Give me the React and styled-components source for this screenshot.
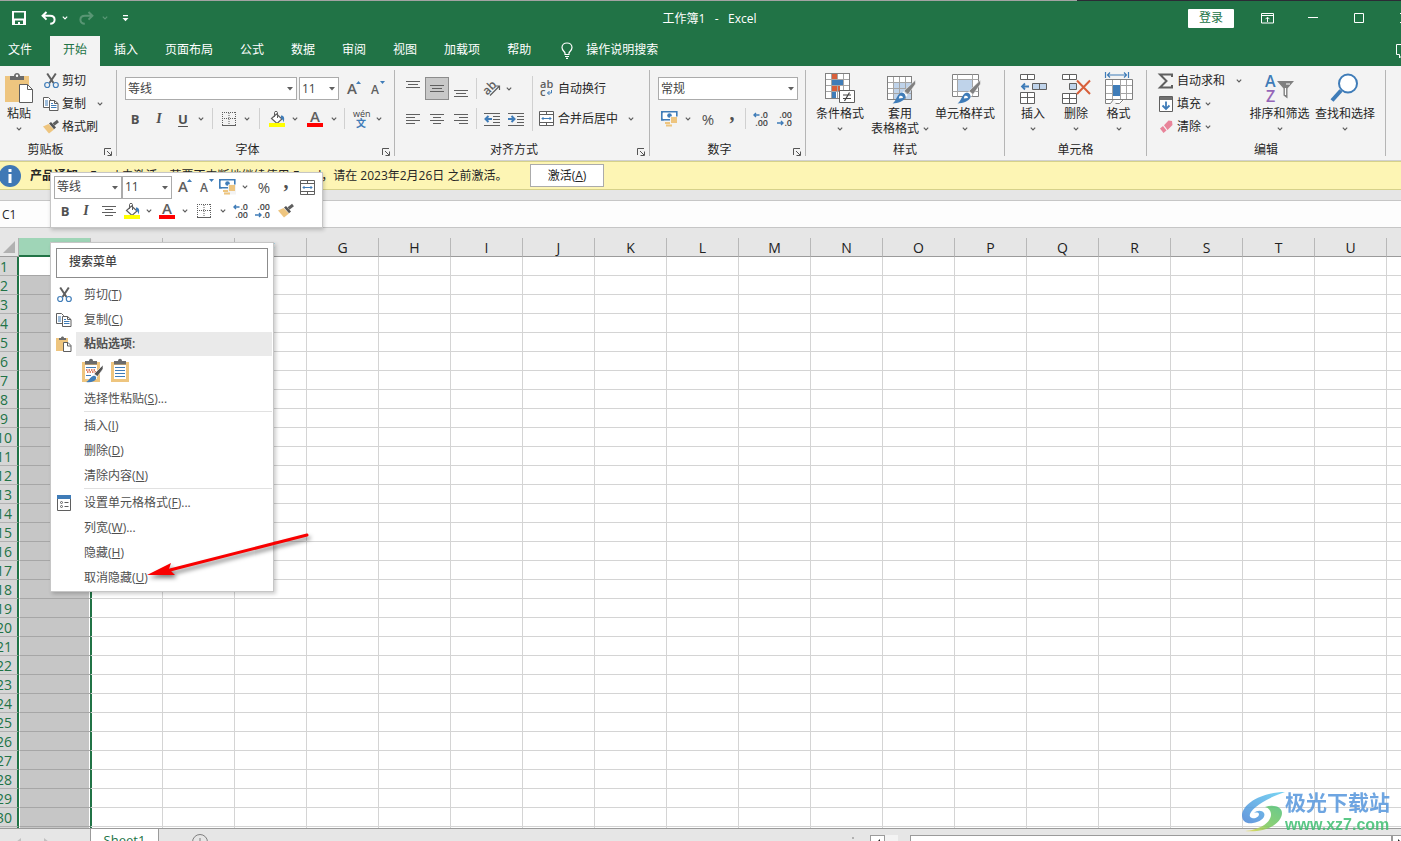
import React from 'react'
import styled, { createGlobalStyle, css } from 'styled-components'

const GREEN = '#217346'
const GRAY = '#5f5f5f'
const BLUE = '#3f7cb8'
const TAN = '#eec57f'

/* ---------- icons ---------- */

function Svg({ w = 16, h = 16, children, label }) {
  return (
    <svg width={w} height={h} viewBox={`0 0 ${w} ${h}`} fill="none" stroke={GRAY} role="img" aria-label={label} aria-hidden={!label}>
      {children}
    </svg>
  )
}

const Chevron = ({ color = GRAY }) => (
  <svg width="6" height="4" viewBox="0 0 6 4" fill="none" stroke={color} strokeWidth="1.2"><path d="M.8.6 3 2.800 5.200.6" /></svg>
)

const Triangle = () => (
  <svg width="6" height="4" viewBox="0 0 6 4"><path d="M0 0h6L3 3.500z" fill={GRAY} /></svg>
)

const SaveIcon = () => (
  <svg width="14" height="14" viewBox="0 0 14 14"><path d="M0 0h14v14H0z" fill="#fff" /><path d="M2 1.500h10v6H2zM3 9.500h8V13H8v-2H6v2H3z" fill={GREEN} /></svg>
)

const UndoIcon = ({ color = '#fff', flip }) => (
  <svg width="15" height="14" viewBox="0 0 15 14" fill="none" stroke={color} strokeWidth="2">
    <g transform={flip ? 'matrix(-1 0 0 1 15 0)' : undefined}>
      <path d="M5.500 1 1.600 4.800l3.900 3.800M1.800 4.800H9c3 0 4.600 1.700 4.600 4 0 2.500-2 4-4.400 4" />
    </g>
  </svg>
)

const CustomizeIcon = () => (
  <svg width="7" height="7" viewBox="0 0 7 7" fill="#fff"><path d="M1 0h5v1.200H1zM.5 3h6l-3 3.200z" /></svg>
)

const RibbonModeIcon = () => (
  <svg width="13" height="11" viewBox="0 0 13 11" fill="none" stroke="#fff"><path d="M.5.5h12v9.500H.5zM1 2.500h11M6.500 9V4.500M4.500 6.200l2-2 2 2" /></svg>
)

const BulbIcon = () => (
  <svg width="12" height="17" viewBox="0 0 12 17" fill="none" stroke="#fff" strokeWidth="1.200"><path d="M4 12.500V11C3.500 9.300 1 8.400 1 5.500 1 2.800 3.200 1 6 1s5 1.800 5 4.500c0 2.900-2.500 3.800-3 5.500v1.500zM4 14.500h4M5 16.300h2" /></svg>
)

const PasteIcon = () => (
  <Svg w={28} h={30}>
    <path d="M0 3h24v26H0z" fill={TAN} stroke="none" />
    <path d="M5 7V3h4c0-4 6-4 6 0h4v4z" fill="#6b6b6b" stroke="none" /><circle cx="12" cy="2.800" r="1.200" fill="#fff" stroke="none" />
    <path d="M14.500 11.500h8l5 5v13h-13z" fill="#fff" /><path d="M22.500 11.500v5h5" />
  </Svg>
)

const CutIcon = () => (
  <Svg w={15} h={16}>
    <path d="M3.200.5 9.500 10M11.800.5 5.500 10" strokeWidth="2" />
    <circle cx="3.200" cy="12" r="2.500" stroke={BLUE} strokeWidth="1.200" /><circle cx="11.800" cy="12" r="2.500" stroke={BLUE} strokeWidth="1.200" />
  </Svg>
)

const CopyIcon = () => (
  <Svg w={16} h={14}>
    <path d="M.5.5h5l2 2v8h-7z" fill="#fff" /><path d="M2 4h3M2 6h3M2 8h3" stroke={BLUE} />
    <path d="M6.500 3.500h5l3.500 3v7H6.500z" fill="#fff" /><path d="M11.500 3.500v3H15" /><path d="M8 8.500h5.500M8 10.500h5.500M8 6.500h2" stroke={BLUE} />
  </Svg>
)

const BrushIcon = () => (
  <Svg w={16} h={14}>
    <path d="M0 6.500 5.500 4l5.500 5.500-5 4z" fill={TAN} stroke="none" />
    <path d="M6 3.500 8 2l5 5.500-2 1.800z" fill="#555" stroke="none" /><path d="M10.500 4.500 15 1" strokeWidth="3" />
  </Svg>
)

const SizeIcon = ({ small }) => (
  <Svg w={15} h={18} label={small ? '减小字号' : '增大字号'}>
    <text x="1" y="14" fontSize={small ? 12 : 15} fontWeight="600" fontFamily="Open Sans, sans-serif" fill={GRAY} stroke="none">A</text>
    <path d={small ? 'M10 1h5l-2.500 3z' : 'M10 4h5L12.500 1z'} fill={BLUE} stroke="none" />
  </Svg>
)

const BorderIcon = () => (
  <Svg w={14} h={14}><path d="M.5 0v13M13.500 0v13M0 .5h14M7 1v12M0 6.500h14" strokeDasharray="1 1" /><path d="M0 13.500h14" /></Svg>
)

const FillIcon = () => (
  <Svg w={16} h={16}>
    <path d="m7.500 3 5.500 5-5 4.500-5.500-5z" fill="#fff" strokeWidth="1.200" /><path d="M5.500 6V1.500c0-1.500 3-1.500 3 0V7" />
    <path d="M12 4.500c3 0 4 2.500 2.500 7-.3-2.500-1-3.500-2.500-4z" fill={BLUE} stroke="none" />
    <path d="M0 12h16v4H0z" fill="#ffff00" stroke="none" />
  </Svg>
)

const FontColorIcon = () => (
  <Svg w={16} h={16} label="字体颜色">
    <text x="3" y="11" fontSize="15" fontWeight="600" fontFamily="Open Sans, sans-serif" fill={GRAY} stroke="none">A</text>
    <path d="M0 12h16v4H0z" fill="#ff0000" stroke="none" />
  </Svg>
)

const PhoneticIcon = () => (
  <Svg w={18} h={18} label="拼音">
    <text x="1" y="7" fontSize="9" fontFamily="Open Sans, sans-serif" fill="#444" stroke="none">wén</text>
    <text x="4" y="17" fontSize="10" fontWeight="700" fontFamily="Noto Sans CJK SC, sans-serif" fill={BLUE} stroke="none">文</text>
  </Svg>
)

const lineSets = {
  top: 'M0 1.500h14M2 4.500h10M0 7.500h14',
  middle: 'M0 5.500h14M2 8.500h10M0 11.500h14',
  bottom: 'M0 10.500h14M2 13.500h10M0 16.500h14',
  left: 'M0 4.500h14M0 7.500h9M0 10.500h14M0 13.500h9',
  center: 'M0 4.500h14M3 7.500h8M0 10.500h14M3 13.500h8',
  right: 'M0 4.500h14M5 7.500h9M0 10.500h14M5 13.500h9',
}
const LinesIcon = ({ kind }) => <Svg w={14} h={18}><path d={lineSets[kind]} /></Svg>

const OrientationIcon = () => (
  <Svg w={17} h={16} label="方向">
    <text x="0" y="11" fontSize="12" fontWeight="600" fontFamily="Open Sans, sans-serif" fill={GRAY} stroke="none" transform="rotate(-45 6 9)">ab</text>
    <path d="m6 14.500 9-9M11.500 5H15.500V9" strokeWidth="1.200" />
  </Svg>
)

const IndentIcon = ({ out }) => (
  <Svg w={16} h={14}>
    <path d="M0 1.500h16M9 4.500h7M9 7.500h7M9 10.500h7M0 13.500h16" />
    <path d={out ? 'M8 7H2M4.500 4 1.500 7l3 3' : 'M0 7h6M3.500 4l3 3-3 3'} stroke={BLUE} strokeWidth="2" />
  </Svg>
)

const WrapIcon = () => (
  <Svg w={15} h={18}>
    <text x="1" y="8" fontSize="11" fontWeight="600" fontFamily="Open Sans, sans-serif" fill={GRAY} stroke="none">ab</text>
    <text x="1" y="16" fontSize="11" fontWeight="600" fontFamily="Open Sans, sans-serif" fill={GRAY} stroke="none">c</text>
    <path d="M12.500 10v3H8.500M10.500 11l-2 2 2 2" stroke={BLUE} />
  </Svg>
)

const MergeIcon = () => (
  <Svg w={15} h={15}>
    <path d="M.5.500h14v14H.5zM.5 3.500h14M.5 11.500h14M7.500.5v3M7.500 11.500v3" fill="#fff" />
    <path d="M3 7.500h9M4.500 6 3 7.500 4.500 9M10.500 6 12 7.500 10.500 9" stroke={BLUE} />
  </Svg>
)

const MoneyIcon = () => (
  <Svg w={17} h={16}>
    <path d="M.8.8h15v8H.8z" fill="#fff" stroke={BLUE} strokeWidth="1.600" /><circle cx="8.500" cy="4.500" r="2.300" fill={BLUE} stroke="none" />
    <path d="M0 3.500 3 0H0zM0 6l3 3.500H0z" fill={BLUE} stroke="none" />
    <path d="M9 5.500h8v10H5v-5h4z" fill="#f3f3f3" stroke="none" />
    <path d="M10 7h6M10 9h6M10 11h6M4 12h5M5 14.500h6" stroke={TAN} strokeWidth="1.800" />
  </Svg>
)

const DecimalIcon = ({ more }) => (
  <Svg w={16} h={16} label={more ? '增加小数位数' : '减少小数位数'}>
    <text x="15" y="7" textAnchor="end" fontSize="9" fontWeight="600" fontFamily="Open Sans, sans-serif" fill="#444" stroke="none">{more ? '.0' : '.00'}</text>
    <text x="15" y="15" textAnchor="end" fontSize="9" fontWeight="600" fontFamily="Open Sans, sans-serif" fill="#444" stroke="none">{more ? '.00' : '.0'}</text>
    <path d={more ? 'M6.500 4H1M3 2 1 4l2 2' : 'M0 12h6M4 10l2 2-2 2'} stroke={BLUE} strokeWidth="1.400" />
  </Svg>
)

const ConditionalIcon = () => (
  <Svg w={30} h={31}>
    <path d="M.5.5h24v25H.5z" fill="#fff" />
    <path d="M7 1h6v6H7zM7 13h8v6H7z" fill="#d85f3a" stroke="none" /><path d="M7 7h11v6H7zM7 19h4v6H7z" fill={BLUE} stroke="none" />
    <path d="M6.500.5v25M12.500.5v25M18.500.5v25M.5 6.500h24M.5 12.500h24M.5 18.500h24" stroke="#a5a5a5" />
    <path d="M7 7h11v5H7z" fill={BLUE} stroke="none" />
    <path d="M.5.5h24v25H.5z" stroke="#808080" /><path d="M14.500 17.500h15v12h-15z" fill="#fff" />
    <path d="M18 22h8M18 25.500h8M24.500 19.500l-5 8.500" strokeWidth="1.200" stroke="#444" />
  </Svg>
)

const StyleBrush = () => (
  <g stroke="none">
    <path d="M31.500 7v4L24 21.500l-4-3.500z" fill="#808080" stroke="#f3f3f3" strokeWidth=".6" />
    <path d="M19.500 18.500 23.500 22 22 24l-4.500-3.800z" fill="#fff" />
    <path d="M16.500 20c3-.8 5.500 1.400 5 4.300C20.500 28 14 30.500 8.500 30.500c3.500-2 4.500-9 8-10.500z" fill={BLUE} />
    <path d="M15.500 23c2-1 3.800.2 3.300 2l-4 .6z" fill="#fff" />
  </g>
)

const TableStyleIcon = () => (
  <Svg w={32} h={31}>
    <path d="M3.500 3.500h24v23h-24z" fill="#fff" /><path d="M9 9h18v17H9z" fill="#bfd3ea" stroke="none" />
    <path d="M9.500 3.500v23M15.500 3.500v23M21.500 3.500v23M3.500 9.500h24M3.500 15.500h24M3.500 20.500h24" stroke="#a5a5a5" />
    <path d="M3.500 3.500h24v23h-24z" stroke="#808080" /><StyleBrush />
  </Svg>
)

const CellStyleIcon = () => (
  <Svg w={32} h={31}>
    <path d="M3.500 1.500h26v22h-26z" fill="#fff" stroke="#808080" /><path d="M9 7h14v11H9z" fill="#bfd3ea" stroke="none" />
    <path d="M8.500 1.500v22M23.500 1.500v22M3.500 6.500h26M3.500 18.500h26" stroke="#a5a5a5" /><StyleBrush />
  </Svg>
)

const InsertCellsIcon = () => (
  <Svg w={28} h={31}>
    <path d="M1.500 1.500h14v5h-14zM8.500 1.500v5M1.500 19.500h14v11h-14zM8.500 19.500v11M1.500 24.500h14" fill="#fff" />
    <path d="M13.500 10.500h14v6h-14zM20.500 10.500v6" fill="#bfd3ea" /><path d="M10 13.500H3.500M6 10.500l-3 3 3 3" stroke={BLUE} strokeWidth="1.800" />
  </Svg>
)

const DeleteCellsIcon = () => (
  <Svg w={30} h={31}>
    <path d="M1.500 1.500h14v5h-14zM8.500 1.500v5M1.500 20.500h14v10h-14zM8.500 20.500v10M1.500 25.500h14" fill="#fff" />
    <path d="M8.500 10.500h7v6h-7z" fill="#bfd3ea" /><path d="M16 7.500 29 21M29 7.500 16 21" stroke="#d85f3a" strokeWidth="2" />
  </Svg>
)

const FormatCellsIcon = () => (
  <Svg w={30} h={32}>
    <path d="M1.500 0v6M24.500 0v6M3 3h20M6 .5 3.500 3 6 5.500M20 .5 22.500 3 20 5.500" stroke={BLUE} strokeWidth="1.200" />
    <path d="M1.500 7.500h27v20h-7l-5 4h-3l-3-3-4 3h-5z" fill="#fff" stroke="none" />
    <path d="M8.500 7.500v20M16.500 7.500v20M22.500 7.500v20M1.500 13.500h27M1.500 21.500h27" stroke="#a5a5a5" /><path d="M9 13h7v11H9z" fill={BLUE} stroke="none" />
    <path d="M1.500 7.500h27v20h-27zM1.500 27.500v4h5l3-4M11.500 31.500h4l4-4" stroke="#808080" />
  </Svg>
)

const SortIcon = () => (
  <Svg w={32} h={31} label="A到Z">
    <text x="1" y="14" fontSize="16" fontWeight="600" fontFamily="Open Sans, sans-serif" fill={BLUE} stroke="none">A</text>
    <text x="2" y="29" fontSize="16" fontWeight="600" fontFamily="Open Sans, sans-serif" fill="#9566b8" stroke="none">Z</text>
    <path d="M13 8h17l-6.500 7.500v10l-4-3v-7z" fill="#808080" stroke="none" /><path d="M22 11h4M21.500 15v7" stroke="#fff" strokeWidth="1.200" />
  </Svg>
)

const FindIcon = () => (
  <Svg w={30} h={30}><path d="M11 17.500 2 27.500" stroke={BLUE} strokeWidth="4" /><circle cx="18" cy="10.500" r="9" stroke={BLUE} strokeWidth="2" fill="#fff" /></Svg>
)

const SigmaIcon = () => <Svg w={16} h={16}><path d="M14 4V1.500H2L8.500 8 2 14.500h12V12" strokeWidth="2" /></Svg>
const FillDownIcon = () => (
  <Svg w={14} h={16}><path d="M.5.500h13v15H.5z" fill="#fff" /><path d="M1 1h12v3H1z" fill="#707070" stroke="none" /><path d="M7 5.500v7M3.500 9.500 7 13l3.500-3.500" stroke={BLUE} strokeWidth="1.800" /></Svg>
)
const EraserIcon = () => (
  <Svg w={14} h={14}><path d="m1 8.500 3.500 4.500 3-2.500-3.500-4.500zM5 5.300 9.500.5l3.500.5.5 4-5 5z" fill="#e8849a" stroke="none" /></Svg>
)

const LauncherIcon = () => <Svg w={8} h={8}><path d="M.5 7V.500H7M3 3l4 4M7.500 3.500v4h-4" stroke="#555" /></Svg>

const InfoIcon = () => (
  <svg width="22" height="22" viewBox="0 0 22 22"><circle cx="11" cy="11" r="11" fill="#3f78b5" /><path d="M9.500 4h3v3h-3zM9.500 9h3v9h-3z" fill="#fff" /></svg>
)

const PasteSmallIcon = () => (
  <Svg w={16} h={16}>
    <path d="M0 2h12v13H0z" fill={TAN} stroke="none" /><path d="M3 4V2h2c0-2 3-2 3 0h2v2z" fill="#6b6b6b" stroke="none" />
    <path d="M7.500 6.500h4.500l3 3v6H7.500z" fill="#fff" /><path d="M11.500 6.500v3.500H15" />
  </Svg>
)

const ClipIcon = ({ brush }) => (
  <Svg w={22} h={24} label={brush ? '保留源格式' : '粘贴'}>
    <path d="M1 3h18v20H1z" fill={TAN} stroke="none" /><path d="M4 6h12v14H4z" fill="#fff" stroke="none" />
    <path d="M4 5.500V2h4c0-3 4-3 4 0h4v3.500z" fill="#6b6b6b" stroke="none" />
    <path d={brush ? 'M5 8.500h10M5 16.500h5' : 'M5 8.500h10M5 11.500h10M5 14.500h10M5 17.500h10'} stroke={BLUE} />
    {brush && (
      <>
        <path d="M5 11h10M6 13h9" stroke="#d85f3a" strokeWidth="1.500" strokeDasharray="1.500 1" />
        <path d="m22 6-9 9 3.500 2.500L22 10z" fill="#555" stroke="#fff" strokeWidth=".6" /><path d="M12 17c2-1 4 1 3 3s-5 4-10 3c3-1 4-5 7-6z" fill={BLUE} stroke="none" />
      </>
    )}
  </Svg>
)

const FormatDialogIcon = () => (
  <Svg w={14} h={16}><path d="M.5.500h13v15H.5z" fill="#fff" /><path d="M0 0h14v4H0z" fill={BLUE} stroke="none" /><path d="M7.500 7.500h4M7.500 11.500h4" /><circle cx="4.500" cy="7.500" r="1" /><circle cx="4.500" cy="11.500" r="1" /></Svg>
)

const SwirlLogo = () => (
  <svg width="44" height="40" viewBox="0 0 44 40">
    <defs>
      <linearGradient id="swirlBlue" x1="0" y1="1" x2="1" y2="0"><stop offset="0" stopColor="#4a84d6" /><stop offset="1" stopColor="#62cff2" /></linearGradient>
      <linearGradient id="swirlGreen" x1="1" y1="0" x2="0" y2="1"><stop offset="0" stopColor="#4fc17a" /><stop offset=".6" stopColor="#7cc95c" /><stop offset="1" stopColor="#f3dc4c" /></linearGradient>
    </defs>
    <path d="M44 0C22 0 2 11 1 23c0 7 5 9 11 8 8-1 13-6 11-10-2-3-7-3-10 0 3-1 5 0 5 1 0 3-4 5-7 4C3 23 17 9 44 0z" fill="url(#swirlBlue)" />
    <path d="M24 15c9-3 17 0 17 6 0 9-13 20-37 18 13-1 25-7 26-16 0-4-2-7-6-8z" fill="url(#swirlGreen)" />
  </svg>
)

/* ---------- pieces ---------- */

function Combo({ label, value, wide }) {
  return (
    <ComboBox $wide={wide}>
      <ComboSelect aria-label={label} defaultValue={value}><option>{value}</option></ComboSelect>
      <ComboArrow><Triangle /></ComboArrow>
    </ComboBox>
  )
}

function Group({ name, launcher, children }) {
  return (
    <>
      <GroupBox>
        <GroupBody>{children}</GroupBody>
        <GroupFooter>
          <GroupName>{name}</GroupName>
          {launcher && <Launcher aria-label={`${name}设置`}><LauncherIcon /></Launcher>}
        </GroupFooter>
      </GroupBox>
      <GroupLine />
    </>
  )
}

function BigCommand({ icon, label, second, width }) {
  return (
    <BigButton $width={width}>
      <BigIcon>{icon}</BigIcon>
      <BigLabel>{label}</BigLabel>
      <BigLabel>{second}<Chevron /></BigLabel>
    </BigButton>
  )
}

function ListCommand({ icon, label, menu, far }) {
  return (
    <ListButton>
      <ListIcon>{icon}</ListIcon>
      {label}
      {menu && <ListArrow $far={far}><Chevron /></ListArrow>}
    </ListButton>
  )
}

function MenuEntry({ icon, text, hotkey, dots }) {
  return (
    <MenuItem role="menuitem">
      <MenuIcon>{icon}</MenuIcon>
      <span>{text}(<u>{hotkey}</u>){dots && '...'}</span>
    </MenuItem>
  )
}

const tabs = ['开始', '插入', '页面布局', '公式', '数据', '审阅', '视图', '加载项', '帮助']
const columns = ['C', 'D', 'E', 'F', 'G', 'H', 'I', 'J', 'K', 'L', 'M', 'N', 'O', 'P', 'Q', 'R', 'S', 'T', 'U', 'V']
const rows = Array.from({ length: 31 }, (_, i) => i + 1)

function TitleBar() {
  return (
    <TitleRow>
      <QuickAccess>
        <QuickButton $width={38} aria-label="保存"><SaveIcon /></QuickButton>
        <QuickButton $width={20} aria-label="撤消"><UndoIcon /></QuickButton>
        <QuickButton $width={14} aria-label="撤消列表"><Chevron color="#fff" /></QuickButton>
        <QuickButton $width={28} $dim aria-label="恢复"><UndoIcon flip /></QuickButton>
        <QuickButton $width={10} $dim aria-label="恢复列表"><Chevron color="#fff" /></QuickButton>
        <QuickButton $width={30} aria-label="自定义快速访问工具栏"><CustomizeIcon /></QuickButton>
      </QuickAccess>
      <DocTitle>工作簿1&nbsp;&nbsp; -&nbsp;&nbsp; Excel</DocTitle>
      <WindowButtons>
        <SignIn>登录</SignIn>
        <WindowButton aria-label="功能区显示选项"><RibbonModeIcon /></WindowButton>
        <WindowButton aria-label="最小化"><svg width="10" height="10" stroke="#fff"><path d="M0 4.500h10" /></svg></WindowButton>
        <WindowButton aria-label="最大化"><svg width="10" height="10" stroke="#fff" fill="none"><path d="M.5.500h9v9h-9z" /></svg></WindowButton>
        <WindowButton aria-label="关闭"><svg width="10" height="10" stroke="#fff"><path d="m0 0 10 10M10 0 0 10" /></svg></WindowButton>
      </WindowButtons>
    </TitleRow>
  )
}

function Ribbon() {
  return (
    <RibbonBar>
      <Group name="剪贴板" launcher>
        <ClipboardBody>
          <BigCommand icon={<PasteIcon />} label="粘贴" width={48} />
          <CommandList>
            <ListCommand icon={<CutIcon />} label="剪切" />
            <ListCommand icon={<CopyIcon />} label="复制" menu far />
            <ListCommand icon={<BrushIcon />} label="格式刷" />
          </CommandList>
        </ClipboardBody>
      </Group>
      <Group name="字体" launcher>
        <ToolRows $width={264}>
          <ToolRow>
            <ComboPad />
            <Combo label="字体" value="等线" wide={172} />
            <ComboPad />
            <Combo label="字号" value="11" wide={40} />
            <Tool $width={28}><SizeIcon /></Tool>
            <Tool $width={20}><SizeIcon small /></Tool>
          </ToolRow>
          <ToolRow>
            <Tool $width={24}><Letter $bold>B</Letter></Tool>
            <Tool $width={24}><Letter $italic>I</Letter></Tool>
            <Tool $width={24}><Letter $underline>U</Letter></Tool>
            <Tool $width={12} aria-label="下划线"><Chevron /></Tool>
            <ToolLine />
            <Tool $width={22} aria-label="边框"><BorderIcon /></Tool>
            <Tool $width={14} aria-label="更多边框"><Chevron /></Tool>
            <ToolLine />
            <Tool $width={24} aria-label="填充颜色"><FillIcon /></Tool>
            <Tool $width={12} aria-label="更多填充颜色"><Chevron /></Tool>
            <Tool $width={28}><FontColorIcon /></Tool>
            <Tool $width={10} aria-label="更多字体颜色"><Chevron /></Tool>
            <ToolLine />
            <Tool $width={22}><PhoneticIcon /></Tool>
            <Tool $width={14} aria-label="更多拼音"><Chevron /></Tool>
          </ToolRow>
        </ToolRows>
      </Group>
      <Group name="对齐方式" launcher>
        <ToolRows $width={128} $tight>
          <ToolRow>
            <Tool $width={24} aria-label="顶端对齐"><LinesIcon kind="top" /></Tool>
            <Tool $width={24} $on aria-label="垂直居中"><LinesIcon kind="middle" /></Tool>
            <Tool $width={24} aria-label="底端对齐"><LinesIcon kind="bottom" /></Tool>
            <ToolLine $narrow />
            <Tool $width={24}><OrientationIcon /></Tool>
            <Tool $width={10} aria-label="更多方向"><Chevron /></Tool>
          </ToolRow>
          <ToolRow>
            <Tool $width={24} aria-label="左对齐"><LinesIcon kind="left" /></Tool>
            <Tool $width={24} aria-label="居中"><LinesIcon kind="center" /></Tool>
            <Tool $width={24} aria-label="右对齐"><LinesIcon kind="right" /></Tool>
            <ToolLine $narrow />
            <Tool $width={24} aria-label="减少缩进量"><IndentIcon out /></Tool>
            <Tool $width={24} aria-label="增加缩进量"><IndentIcon /></Tool>
          </ToolRow>
        </ToolRows>
        <TallLine />
        <ToolRows $width={103}>
          <ToolRow><TextTool><WrapIcon />自动换行</TextTool></ToolRow>
          <ToolRow><TextTool><MergeIcon />合并后居中</TextTool><Tool $width={14} aria-label="更多合并"><Chevron /></Tool></ToolRow>
        </ToolRows>
      </Group>
      <Group name="数字" launcher>
        <ToolRows $width={142}>
          <ToolRow><ComboPad /><Combo label="数字格式" value="常规" wide={140} /></ToolRow>
          <ToolRow>
            <Tool $width={26} aria-label="会计数字格式"><MoneyIcon /></Tool>
            <Tool $width={12} aria-label="更多货币"><Chevron /></Tool>
            <Tool $width={28}><Letter $big>%</Letter></Tool>
            <Tool $width={20}><Letter $comma>,</Letter></Tool>
            <ToolLine $narrow />
            <Tool $width={24}><DecimalIcon more /></Tool>
            <Tool $width={24}><DecimalIcon /></Tool>
          </ToolRow>
        </ToolRows>
      </Group>
      <Group name="样式">
        <BigRow>
          <BigCommand icon={<ConditionalIcon />} label="条件格式" width={60} />
          <BigCommand icon={<TableStyleIcon />} label="套用" second="表格格式" width={60} />
          <BigCommand icon={<CellStyleIcon />} label="单元格样式" width={70} />
        </BigRow>
      </Group>
      <Group name="单元格">
        <BigRow>
          <BigCommand icon={<InsertCellsIcon />} label="插入" width={48} />
          <BigCommand icon={<DeleteCellsIcon />} label="删除" width={38} />
          <BigCommand icon={<FormatCellsIcon />} label="格式" width={47} />
        </BigRow>
      </Group>
      <Group name="编辑">
        <EditBody>
          <CommandList>
            <ListCommand icon={<SigmaIcon />} label="自动求和" menu far />
            <ListCommand icon={<FillDownIcon />} label="填充" menu />
            <ListCommand icon={<EraserIcon />} label="清除" menu />
          </CommandList>
          <BigRow>
            <BigCommand icon={<SortIcon />} label="排序和筛选" width={65} />
            <BigCommand icon={<FindIcon />} label="查找和选择" width={66} />
          </BigRow>
        </EditBody>
      </Group>
    </RibbonBar>
  )
}

function Grid() {
  return (
    <GridArea>
      <Sheet>
        <thead>
          <tr>
            <Corner><svg width="12" height="12"><path d="M12 0v12H0z" fill="#b1b1b1" /></svg></Corner>
            {columns.map((c, i) => <ColHead key={c} $selected={i === 0} scope="col">{c}</ColHead>)}
          </tr>
        </thead>
        <tbody>
          {rows.map((r) => (
            <tr key={r}>
              <RowHead scope="row">{r}</RowHead>
              {columns.map((c, i) => <Cell key={c} $selected={i === 0} $active={i === 0 && r === 1} />)}
            </tr>
          ))}
        </tbody>
      </Sheet>
    </GridArea>
  )
}

function MiniToolbar() {
  return (
    <MiniBox>
      <MiniRow>
        <Combo label="浮动字体" value="等线" wide={68} />
        <Combo label="浮动字号" value="11" wide={50} />
        <Tool $width={24}><SizeIcon /></Tool>
        <Tool $width={20}><SizeIcon small /></Tool>
        <Tool $width={22} aria-label="货币"><MoneyIcon /></Tool>
        <Tool $width={14} aria-label="更多货币"><Chevron /></Tool>
        <Tool $width={24}><Letter $big>%</Letter></Tool>
        <Tool $width={20}><Letter $comma>,</Letter></Tool>
        <Tool $width={22} aria-label="合并"><MergeIcon /></Tool>
      </MiniRow>
      <MiniRow>
        <Tool $width={22}><Letter $bold>B</Letter></Tool>
        <Tool $width={20}><Letter $italic>I</Letter></Tool>
        <Tool $width={26} aria-label="居中"><LinesIcon kind="center" /></Tool>
        <Tool $width={20} aria-label="填充颜色"><FillIcon /></Tool>
        <Tool $width={14} aria-label="更多填充"><Chevron /></Tool>
        <Tool $width={22}><FontColorIcon /></Tool>
        <Tool $width={14} aria-label="更多颜色"><Chevron /></Tool>
        <Tool $width={24} aria-label="边框"><BorderIcon /></Tool>
        <Tool $width={14} aria-label="更多边框"><Chevron /></Tool>
        <Tool $width={22}><DecimalIcon more /></Tool>
        <Tool $width={22}><DecimalIcon /></Tool>
        <Tool $width={24} aria-label="格式刷"><BrushIcon /></Tool>
      </MiniRow>
    </MiniBox>
  )
}

function ContextMenu() {
  return (
    <MenuBox role="menu">
      <MenuSearch type="text" placeholder="搜索菜单" aria-label="搜索菜单" />
      <MenuEntry icon={<CutIcon />} text="剪切" hotkey="T" />
      <MenuEntry icon={<CopyIcon />} text="复制" hotkey="C" />
      <PasteHeader>
        <MenuIcon><PasteSmallIcon /></MenuIcon>
        <PasteTitle>粘贴选项:</PasteTitle>
      </PasteHeader>
      <PasteRow>
        <PasteChoice><ClipIcon brush /></PasteChoice>
        <PasteChoice><ClipIcon /></PasteChoice>
      </PasteRow>
      <MenuEntry text="选择性粘贴" hotkey="S" dots />
      <MenuLine />
      <MenuEntry text="插入" hotkey="I" />
      <MenuEntry text="删除" hotkey="D" />
      <MenuEntry text="清除内容" hotkey="N" />
      <MenuLine />
      <MenuEntry icon={<FormatDialogIcon />} text="设置单元格格式" hotkey="F" dots />
      <MenuEntry text="列宽" hotkey="W" dots />
      <MenuEntry text="隐藏" hotkey="H" />
      <MenuEntry text="取消隐藏" hotkey="U" />
    </MenuBox>
  )
}

function App() {
  return (
    <>
      <GlobalStyle />
      <Screen>
        <Window>
          <TitleBar />
          <TabRow>
            <FileTab>文件</FileTab>
            {tabs.map((t, i) => <Tab key={t} $active={i === 0}>{t}</Tab>)}
            <TellMe><BulbIcon />操作说明搜索</TellMe>
            <CommentButton aria-label="批注">
              <svg width="15" height="15" fill="none" stroke="#fff"><path d="M.5.500h14v10H7l-3.500 3.500v-3.500h-3z" /></svg>
            </CommentButton>
          </TabRow>
          <Ribbon />
          <NoticeBar>
            <InfoIcon />
            <NoticeTitle>产品通知</NoticeTitle>
            <NoticeText>Excel 未激活。若要不中断地继续使用 Excel，请在 2023年2月26日 之前激活。</NoticeText>
            <ActivateButton>激活(<u>A</u>)</ActivateButton>
          </NoticeBar>
          <FormulaRow>
            <NameBox aria-label="名称框" defaultValue="C1" />
            <FormulaInput aria-label="编辑栏" />
          </FormulaRow>
          <Grid />
          <SheetBar>
            <SheetNav>
              <svg width="5" height="8"><path d="M5 0v8L0 4z" fill="#c0c0c0" /></svg>
              <svg width="5" height="8"><path d="M0 0v8l5-4z" fill="#c0c0c0" /></svg>
            </SheetNav>
            <SheetTab>Sheet1</SheetTab>
            <AddSheet aria-label="新工作表"><svg width="18" height="18" fill="none" stroke="#808080"><circle cx="9" cy="9" r="7.500" /><path d="M9 5v8M5 9h8" /></svg></AddSheet>
            <Grip />
            <ScrollButton aria-label="向左滚动"><svg width="4" height="8"><path d="M4 0v8L0 4z" fill="#222" /></svg></ScrollButton>
            <ScrollGap />
            <ScrollThumb />
            <ScrollButton aria-label="向右滚动"><svg width="4" height="8"><path d="M0 0v8l4-4z" fill="#222" /></svg></ScrollButton>
          </SheetBar>
          <MiniToolbar />
          <ContextMenu />
          <ArrowMark width="180" height="60" viewBox="0 0 180 60">
            <path d="M165 9 28 44" stroke="#f80000" strokeWidth="3" strokeLinecap="round" />
            <path d="M5 49 29 37l-2 6 6 6z" fill="#f80000" />
          </ArrowMark>
          <Watermark>
            <SwirlLogo />
            <WatermarkText>
              <WatermarkName>极光下载站</WatermarkName>
              <WatermarkUrl>www.xz7.com</WatermarkUrl>
            </WatermarkText>
          </Watermark>
        </Window>
      </Screen>
    </>
  )
}

export default App

/* ---------- styles ---------- */

const GlobalStyle = createGlobalStyle`
  * { box-sizing: border-box; }
  body {
    margin: 0;
    overflow: hidden;
    font: 12px/16px "Open Sans", "Noto Sans CJK SC", sans-serif;
    color: #262626;
  }
  button, input, select { font: inherit; color: inherit; }
  button { border: 0; background: none; padding: 0; white-space: nowrap; }
  svg { display: block; flex: none; overflow: visible; }
`;

const Screen = styled.div`
  height: 100vh;
  overflow: hidden;
`;

/* the maximised window runs a little past both sides of the screen */
const Window = styled.div`
  position: relative;
  display: flex;
  flex-direction: column;
  height: 100%;
  margin: 0 -27px 0 -9px;
  background: #e6e6e6;
`;

const TitleRow = styled.header`
  display: grid;
  grid-template-columns: 1fr auto 1fr;
  align-items: center;
  height: 36px;
  flex: none;
  background: linear-gradient(90deg, #a3a3a3 1086px, #2b2b35 1086px) top / 100% 1px no-repeat ${GREEN};
  color: #fff;
`;
const QuickAccess = styled.div`
  display: flex;
  align-items: center;
  padding-left: 9px;
`;
const QuickButton = styled.button`
  display: flex;
  justify-content: center;
  width: ${(p) => p.$width}px;
  opacity: ${(p) => (p.$dim ? 0.25 : 1)};
`;
const DocTitle = styled.div`
  padding-top: 1px;
  white-space: nowrap;
`;
const WindowButtons = styled.div`
  display: flex;
  justify-content: flex-end;
  align-items: center;
`;
const SignIn = styled.button`
  width: 46px;
  height: 19px;
  margin-right: 10px;
  background: #fff;
  color: ${GREEN};
  border-radius: 1px;
`;
const WindowButton = styled.button`
  display: flex;
  justify-content: center;
  width: 46px;
`;

const TabRow = styled.nav`
  display: flex;
  gap: 1px;
  height: 30px;
  flex: none;
  background: ${GREEN};
  color: #fff;
`;
const Tab = styled.button`
  padding: 0 13px 2px;
  ${(p) => p.$active && css`
    background: #f3f3f3;
    color: ${GREEN};
  `}
`;
const FileTab = styled(Tab)`
  width: 58px;
`;
const TellMe = styled.button`
  display: flex;
  align-items: center;
  gap: 13px;
  padding: 0 0 2px 16px;
`;
const CommentButton = styled.button`
  margin-left: auto;
  padding-right: 17px;
`;

const RibbonBar = styled.section`
  display: flex;
  height: 95px;
  flex: none;
  background: #f3f3f3;
  border-bottom: 1px solid #d0d0d0;
`;
const GroupBox = styled.div`
  display: flex;
  flex-direction: column;
  padding-top: 3px;
`;
const GroupBody = styled.div`
  display: flex;
  height: 69px;
`;
const GroupFooter = styled.div`
  display: flex;
  align-items: center;
  height: 22px;
`;
const GroupName = styled.div`
  flex: 1;
  padding-top: 2px;
  text-align: center;
`;
const Launcher = styled.button`
  width: 16px;
  padding: 5px 4px 0;
`;
const GroupLine = styled.div`
  width: 1px;
  flex: none;
  margin: 4px 0;
  background: #b5b5b5;
`;

const BigRow = styled.div`
  display: flex;
  padding: 0 4px;
`;
const BigButton = styled.button`
  display: flex;
  flex-direction: column;
  align-items: center;
  width: ${(p) => p.$width}px;
  padding-top: 3px;
`;
const BigIcon = styled.span`
  display: flex;
  align-items: center;
  height: 32px;
  margin-bottom: 2px;
`;
const BigLabel = styled.span`
  display: flex;
  align-items: center;
  gap: 4px;
  height: 15px;
`;

const CommandList = styled.div`
  display: flex;
  flex-direction: column;
`;
const ListButton = styled.button`
  display: flex;
  align-items: center;
  gap: 3px;
  height: 23px;
`;
const ListIcon = styled.span`
  display: flex;
  justify-content: center;
  width: 16px;
`;
const ListArrow = styled.span`
  margin-left: ${(p) => (p.$far ? 8 : 1)}px;
`;
const ClipboardBody = styled.div`
  display: flex;
  width: 125px;
  padding-left: 4px;
`;
const EditBody = styled.div`
  display: flex;
  padding: 0 3px 0 11px;
  ${CommandList} { width: 85px; }
`;

const ToolRows = styled.div`
  display: flex;
  flex-direction: column;
  width: ${(p) => p.$width}px;
  margin: 4px ${(p) => (p.$tight ? 3 : 7)}px 0 6px;
`;
const ToolRow = styled.div`
  display: flex;
  align-items: center;
  height: 31px;
  & + & { height: 29px; }
`;
const Tool = styled.button`
  display: flex;
  align-items: center;
  justify-content: center;
  flex: none;
  width: ${(p) => p.$width}px;
  height: 23px;
  ${(p) => p.$on && css`
    background: #c8c8c8;
    border: 1px solid #8c8c8c;
  `}
`;
const TextTool = styled.button`
  display: flex;
  align-items: center;
  gap: 4px;
  margin-right: 6px;
`;
const ToolLine = styled.div`
  width: 1px;
  height: 21px;
  flex: none;
  margin: 0 ${(p) => (p.$narrow ? 3 : 5)}px;
  background: #d0d0d0;
`;
const TallLine = styled.div`
  width: 1px;
  margin: 7px 0;
  background: #d0d0d0;
`;
const Letter = styled.span`
  color: #505050;
  font-size: ${(p) => (p.$big ? 15 : p.$comma ? 20 : 13)}px;
  font-weight: ${(p) => (p.$big ? 500 : 700)};
  ${(p) => p.$italic && css`
    font-family: "Liberation Serif", serif;
    font-size: 14px;
    font-style: italic;
  `}
  ${(p) => p.$underline && css`
    text-decoration: underline;
    text-underline-offset: 2px;
  `}
  ${(p) => p.$comma && css`
    padding-bottom: 12px;
    font-family: "Liberation Serif", serif;
  `}
`;

const ComboBox = styled.div`
  position: relative;
  flex: none;
  width: ${(p) => p.$wide}px;
  height: 23px;
`;
const ComboSelect = styled.select`
  appearance: none;
  width: 100%;
  height: 100%;
  padding: 0 2px;
  border: 1px solid #ababab;
  border-radius: 0;
  background: #fff;
  color: #444;
`;
const ComboArrow = styled.span`
  position: absolute;
  right: 4px;
  top: 10px;
  pointer-events: none;
`;
const ComboPad = styled.div`
  width: 2px;
`;

const NoticeBar = styled.div`
  display: flex;
  align-items: center;
  height: 29px;
  flex: none;
  padding-left: 8px;
  background: #fdf5b4;
  border-top: 1px solid #d6d18a;
  border-bottom: 1px solid #d6d18a;
  white-space: nowrap;
`;
const NoticeTitle = styled.strong`
  margin: 0 12px 0 9px;
`;
const NoticeText = styled.span`
  width: 440px;
`;
const ActivateButton = styled.button`
  width: 74px;
  height: 23px;
  background: #fff;
  border: 1px solid #ababab;
`;

const FormulaRow = styled.div`
  display: flex;
  height: 48px;
  flex: none;
  padding: 10px 0;
  gap: 30px;
`;
const NameBox = styled.input`
  width: 106px;
  padding: 2px 10px 0;
  background: #fdfdfd;
  border: 1px solid #c6c6c6;
`;
const FormulaInput = styled.input`
  flex: 1;
  background: #fdfdfd;
  border: 1px solid #c6c6c6;
`;

const GridArea = styled.main`
  flex: 1;
  min-height: 0;
  overflow: hidden;
  background: #fff;
`;
const Sheet = styled.table`
  table-layout: fixed;
  width: 1468px;
  border-collapse: separate;
  border-spacing: 0;
  font-size: 14px;
  line-height: 17px;
`;
const Corner = styled.td`
  width: 28px;
  height: 19px;
  padding: 3px 3px 3px 12px;
  background: #e6e6e6;
  border-right: 1px solid #b1b1b1;
  border-bottom: 1px solid #9b9b9b;
`;
const ColHead = styled.th`
  width: 72px;
  height: 19px;
  padding: 0;
  background: #e6e6e6;
  border-right: 1px solid #b8b8b8;
  border-bottom: 1px solid #9b9b9b;
  color: #222;
  font-weight: 400;
  ${(p) => p.$selected && css`
    background: #9fd5b7;
    border-bottom: 2px solid ${GREEN};
  `}
`;
const RowHead = styled.th`
  height: 19px;
  padding: 1px 0 0;
  background: #d6d6d6;
  border-right: 2px solid ${GREEN};
  border-bottom: 1px solid #b1b1b1;
  color: ${GREEN};
  font-weight: 400;
`;
const Cell = styled.td`
  height: 19px;
  padding: 0;
  border-right: 1px solid #d4d4d4;
  border-bottom: 1px solid #d4d4d4;
  ${(p) => p.$selected && css`
    background: ${p.$active ? '#fff' : '#c6c6c6'};
    border-left: 1px solid #fff;
    border-right-color: ${GREEN};
    border-bottom-color: #a6a6a6;
    box-shadow: 1px 0 0 ${GREEN}, inset -1px 0 0 #fff;
  `}
`;

const SheetBar = styled.footer`
  display: flex;
  align-items: flex-start;
  height: 13px;
  flex: none;
  overflow: hidden;
  border-top: 1px solid #9b9b9b;
`;
const SheetNav = styled.div`
  display: flex;
  gap: 23px;
  width: 99px;
  padding: 9px 0 0 25px;
`;
const SheetTab = styled.button`
  width: 69px;
  height: 26px;
  background: #fff;
  border: 1px solid #9b9b9b;
  border-top: 0;
  color: ${GREEN};
  font-size: 13px;
  line-height: 20px;
  padding-bottom: 4px;
`;
const AddSheet = styled.button`
  margin: 4px auto 0 32px;
`;
const Grip = styled.div`
  width: 2px;
  height: 2px;
  margin: 8px 16px 0 0;
  background: #b1b1b1;
`;
const ScrollButton = styled.button`
  display: flex;
  justify-content: center;
  width: 15px;
  height: 17px;
  margin-top: 6px;
  padding-top: 3px;
  background: #fff;
  border: 1px solid #9b9b9b;
`;
const ScrollGap = styled.div`
  width: 25px;
  height: 17px;
  margin-top: 6px;
  background: linear-gradient(90deg, #f3f3f3 50%, #e6e6e6 50%);
`;
const ScrollThumb = styled.div`
  width: 35%;
  max-width: 482px;
  height: 17px;
  margin-top: 6px;
  background: #fff;
  border: 1px solid #9b9b9b;
  & + button { margin-right: 21px; }
`;

const MiniBox = styled.div`
  position: absolute;
  left: 59px;
  top: 172px;
  width: 273px;
  padding: 2px 3px 4px;
  background: #fff;
  border: 1px solid #c6c6c6;
  box-shadow: 1px 2px 4px rgba(0, 0, 0, 0.2);
`;
const MiniRow = styled.div`
  display: flex;
  align-items: center;
  height: 24px;
`;

const MenuBox = styled.div`
  position: absolute;
  left: 59px;
  top: 242px;
  width: 224px;
  padding: 5px 1px 1px;
  background: #fff;
  border: 1px solid #c6c6c6;
  box-shadow: 2px 2px 4px rgba(0, 0, 0, 0.2);
  color: #505050;
`;
const MenuSearch = styled.input`
  display: block;
  width: 212px;
  height: 30px;
  margin: 0 0 4px 4px;
  padding: 0 12px 3px;
  border: 1px solid #8c8c8c;
  &::placeholder {
    color: #444;
    font-weight: 500;
    opacity: 1;
  }
`;
const MenuItem = styled.button`
  display: flex;
  align-items: center;
  width: 100%;
  height: 25px;
`;
const MenuIcon = styled.span`
  display: flex;
  justify-content: center;
  width: 24px;
  margin-right: 8px;
`;
const PasteHeader = styled.div`
  display: flex;
  align-items: center;
  height: 24px;
  ${MenuIcon} { margin-right: 0; }
`;
const PasteTitle = styled.div`
  flex: 1;
  height: 24px;
  padding-left: 8px;
  background: #eaeaea;
  font-weight: 600;
  line-height: 24px;
`;
const PasteRow = styled.div`
  display: flex;
  gap: 7px;
  height: 30px;
  padding-left: 29px;
`;
const PasteChoice = styled.button`
  width: 22px;
`;
const MenuLine = styled.div`
  height: 1px;
  margin: 0 0 1px 32px;
  background: #e1e1e1;
`;

const ArrowMark = styled.svg`
  position: absolute;
  left: 151px;
  top: 526px;
  fill: none;
  pointer-events: none;
  filter: drop-shadow(2px 3px 2px rgba(0, 0, 0, 0.5));
`;

const Watermark = styled.div`
  position: absolute;
  right: 38px;
  bottom: 6px;
  display: flex;
  align-items: center;
  opacity: 0.85;
`;
const WatermarkText = styled.div`
  display: flex;
  flex-direction: column;
  padding-top: 1px;
`;
const WatermarkName = styled.span`
  color: #5596dc;
  font-size: 21px;
  font-weight: 700;
  line-height: 26px;
`;
const WatermarkUrl = styled.span`
  color: #3fbf72;
  font-family: "Liberation Sans", sans-serif;
  font-size: 16px;
  font-weight: 700;
  line-height: 20px;
`;
